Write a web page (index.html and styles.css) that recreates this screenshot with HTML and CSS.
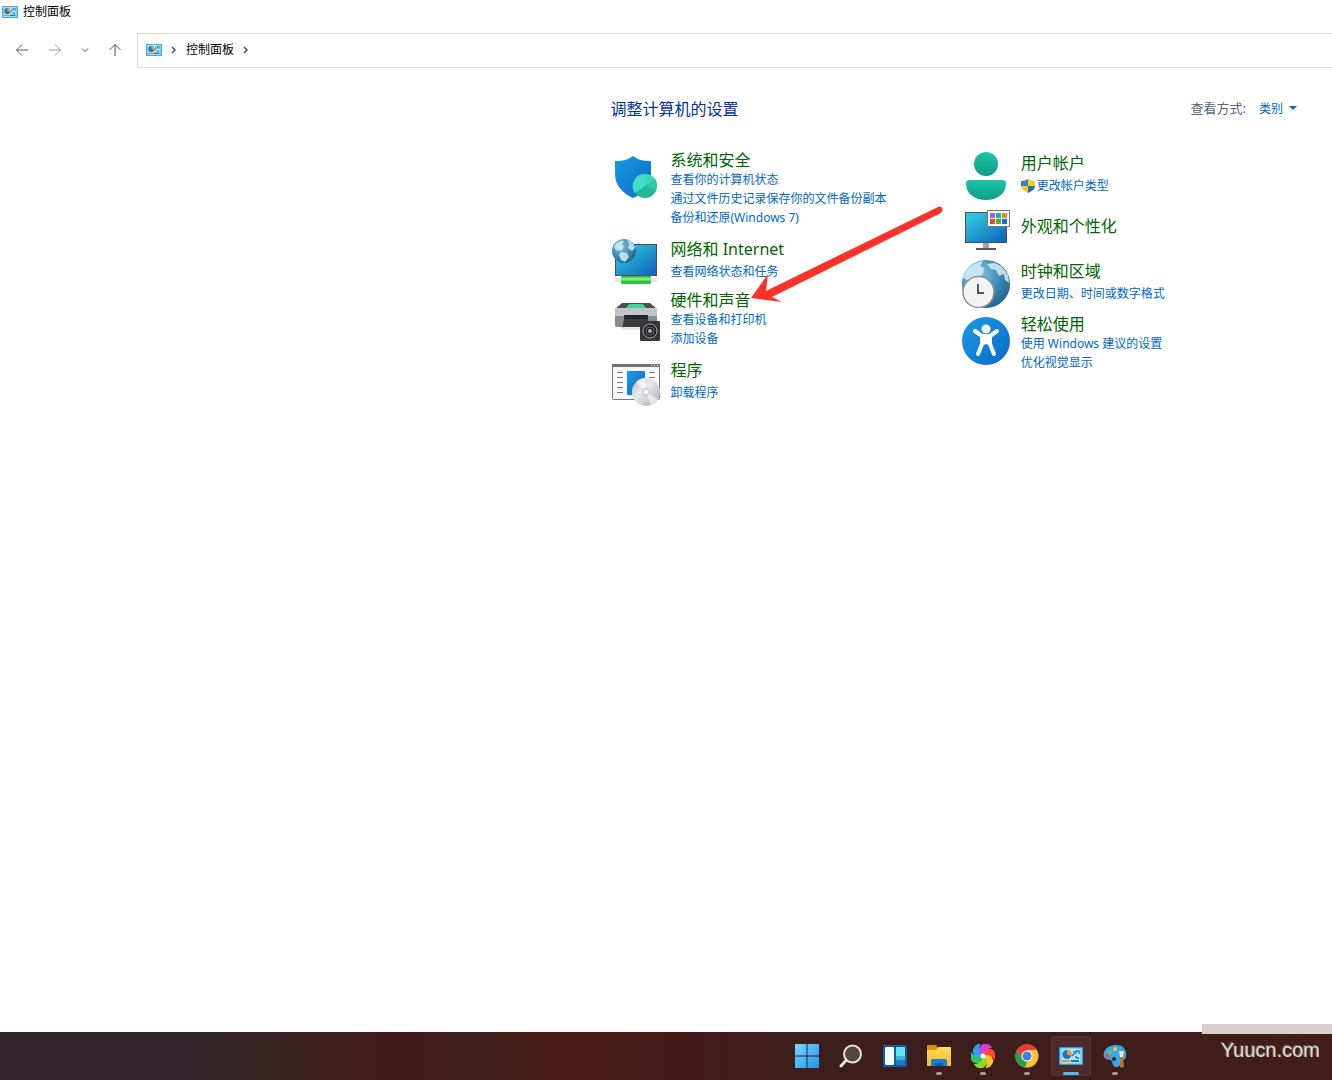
FILE: index.html
```html
<!DOCTYPE html>
<html lang="zh-CN">

<head>
    <meta charset="UTF-8">
    <meta name="viewport" content="width=device-width, initial-scale=1.0">
    <title>控制面板</title>
    <link rel="stylesheet" href="styles.css">
</head>

<body>
    <!-- shared icons -->
    <svg class="sprite" aria-hidden="true">
        <defs>
            <linearGradient id="screen" x1="0" y1="0" x2="1" y2="1">
                <stop offset="0" stop-color="#35d3e6" />
                <stop offset="1" stop-color="#0a62b8" />
            </linearGradient>
            <linearGradient id="blue" x1="0" y1="0" x2="1" y2="1">
                <stop offset="0" stop-color="#1c9be6" />
                <stop offset="1" stop-color="#0868c8" />
            </linearGradient>
            <linearGradient id="start" x1="0" y1="0" x2="1" y2="1">
                <stop offset="0" stop-color="#7ad6fc" />
                <stop offset="1" stop-color="#1d95f2" />
            </linearGradient>
            <linearGradient id="teal" x1="0" y1="0" x2="0" y2="1">
                <stop offset="0" stop-color="#1cc4aa" />
                <stop offset="1" stop-color="#109d88" />
            </linearGradient>
            <radialGradient id="globe" cx=".35" cy=".3" r=".8">
                <stop offset="0" stop-color="#8cc8e0" />
                <stop offset=".5" stop-color="#3f8fb8" />
                <stop offset="1" stop-color="#1d5f89" />
            </radialGradient>
            <linearGradient id="disc" x1="0" y1="0" x2="1" y2="1">
                <stop offset="0" stop-color="#b9bcbf" />
                <stop offset=".4" stop-color="#e9eaeb" />
                <stop offset="1" stop-color="#a6a9ac" />
            </linearGradient>
            <linearGradient id="folder" x1="0" y1="0" x2="0" y2="1">
                <stop offset="0" stop-color="#ffd95c" />
                <stop offset="1" stop-color="#f5b92b" />
            </linearGradient>
        </defs>
        <symbol id="panel" viewBox="0 0 24 18">
            <rect width="24" height="18" rx="1" fill="#2b9bd7" />
            <rect x="1" y="1" width="22" height="16" fill="#7dd0f7" />
            <rect x="3" y="2" width="18" height="14" fill="#b3e6fb" />
            <circle cx="8" cy="7.500" r="4.500" fill="#1478c8" />
            <path d="M8 7.500V2.500A5 5 0 0 1 12.500 9z" fill="#f59a23" />
            <path d="M13 9l2-2V4M17 7V4h3v3M17 11h3M17 9v2" fill="none" stroke="#1670b8" stroke-width="1.300" />
            <path d="M3 14h8" stroke="#f08a24" stroke-width="2" />
            <path d="M12 14h8" stroke="#1478c8" stroke-width="2" />
        </symbol>
        <symbol id="petal" viewBox="0 0 24 24">
            <path d="M12 12C7 9 7 3 12 0c4-1 8 1 9 4-5 0-8 3-9 8z" />
        </symbol>
    </svg>

    <header>
        <div class="titlebar">
            <svg class="panel_icon"><use href="#panel" /></svg>
            <span>控制面板</span>
        </div>
        <div class="toolbar">
            <div class="nav_buttons">
                <button type="button" class="back" aria-label="后退"><svg width="14" height="14" viewBox="0 0 14 14"><path d="M13 7H1.500M7 1.500L1.500 7 7 12.500" /></svg></button>
                <button type="button" class="forward" aria-label="前进"><svg width="14" height="14" viewBox="0 0 14 14"><path d="M1 7h11.500M7 1.500L12.500 7 7 12.500" /></svg></button>
                <button type="button" class="recent" aria-label="最近位置"><svg width="8" height="8" viewBox="0 0 8 8"><path d="M1 2.500l3 3 3-3" /></svg></button>
                <button type="button" class="up" aria-label="向上"><svg width="14" height="14" viewBox="0 0 14 14"><path d="M7 13V1.500M1.500 7L7 1.500 12.500 7" /></svg></button>
            </div>
            <nav class="address">
                <svg class="panel_icon"><use href="#panel" /></svg>
                <svg class="chevron" viewBox="0 0 6 8"><path d="M1 1l3 3-3 3" /></svg>
                <a href="#">控制面板</a>
                <svg class="chevron" viewBox="0 0 6 8"><path d="M1 1l3 3-3 3" /></svg>
            </nav>
        </div>
    </header>

    <div class="content">
        <main>
            <div class="heading">
                <h1>调整计算机的设置</h1>
                <div class="view">
                    <label for="view">查看方式:</label>
                    <div class="view_select">
                        <select id="view" name="view">
                            <option>类别</option>
                            <option>大图标</option>
                            <option>小图标</option>
                        </select>
                        <svg width="8" height="4" viewBox="0 0 8 4"><path d="M0 0h8L4 4z" fill="#0066cc" /></svg>
                    </div>
                </div>
            </div>

            <div class="categories">
                <div class="column">
                    <section class="category multi">
                        <svg class="icon" viewBox="0 0 48 48">
                            <path d="M21 3c5 4 10 5 18 5v13c0 12-8 20-18 24C10 40 3 32 3 21V8c8 0 13-1 18-5z" fill="url(#blue)" />
                            <circle cx="33" cy="33" r="12" fill="#25b79b" />
                            <path d="M33 33L23 40A12 12 0 0 1 33 21z" fill="#3fe0c5" />
                            <path d="M33 33V21a12 12 0 0 1 10 5z" fill="#43d6bb" />
                            <path d="M33 33l10-7a12 12 0 0 1 1 11z" fill="#2fc7aa" />
                        </svg>
                        <div class="text">
                            <h2><a href="#">系统和安全</a></h2>
                            <ul>
                                <li><a href="#">查看你的计算机状态</a></li>
                                <li><a href="#">通过文件历史记录保存你的文件备份副本</a></li>
                                <li><a href="#">备份和还原(Windows 7)</a></li>
                            </ul>
                        </div>
                    </section>

                    <section class="category">
                        <svg class="icon" viewBox="0 0 48 48">
                            <rect x="3" y="6" width="42" height="32" fill="#4a5157" />
                            <rect x="4" y="7" width="40" height="30" fill="url(#screen)" />
                            <rect x="3" y="40" width="42" height="4" rx="1" fill="#e9dfea" />
                            <rect x="9" y="38" width="30" height="8" rx="1" fill="#2fc044" />
                            <path d="M9 41h30" stroke="#83ec7a" stroke-width="3" />
                            <circle cx="12" cy="13" r="12" fill="url(#globe)" />
                            <path d="M2 9c2-5 7-7 10-6l-2 4 2 2-3 4-5-1zM15 2c5 1 7 4 8 8l-3 3-4-3 1-4zM9 14l6 1 2 4-4 5-4-2-2-5z" fill="#d2ebf0" opacity=".85" />
                        </svg>
                        <div class="text">
                            <h2><a href="#">网络和 Internet</a></h2>
                            <ul>
                                <li><a href="#">查看网络状态和任务</a></li>
                            </ul>
                        </div>
                    </section>

                    <section class="category multi">
                        <svg class="icon" viewBox="0 0 48 48">
                            <path d="M10 10h28l7 6H3z" fill="#4b4e52" />
                            <path d="M17 11h14l3 4H14z" fill="#38d49a" />
                            <rect x="3" y="15" width="42" height="19" rx="2" fill="#858b93" />
                            <rect x="3" y="15" width="42" height="8" rx="1" fill="#c1c5cb" />
                            <rect x="12" y="22" width="24" height="8" rx="1" fill="#202327" />
                            <path d="M12 26h24v11H10z" fill="#383b40" />
                            <path d="M11 34h18v3H9z" fill="#e8e9ec" />
                            <rect x="28" y="28" width="20" height="20" rx="1" fill="#34363a" />
                            <circle cx="38" cy="38" r="7" fill="#222427" stroke="#a6a8ab" />
                            <circle cx="38" cy="38" r="4" fill="none" stroke="#686a6d" />
                            <circle cx="38" cy="38" r="2" fill="#aeb0b3" />
                        </svg>
                        <div class="text">
                            <h2><a href="#">硬件和声音</a></h2>
                            <ul>
                                <li><a href="#">查看设备和打印机</a></li>
                                <li><a href="#">添加设备</a></li>
                            </ul>
                        </div>
                        <!-- pointer to this category -->
                        <svg class="pointer" width="194" height="100" viewBox="0 0 194 100">
                            <path d="M0 93L17 69l-2 17 172-84c4-2 6 4 3 6L21 92l10 5z" fill="#fa3228" />
                        </svg>
                    </section>

                    <section class="category">
                        <svg class="icon" viewBox="0 0 48 48">
                            <rect x=".5" y="5.500" width="47" height="35" rx="1" fill="#f8f9fa" stroke="#747779" />
                            <path d="M0 5h48v3H0z" fill="#717477" />
                            <path d="M39 6.500h1M42 6.500h1M45 6.500h1" stroke="#fff" />
                            <path d="M5 13.500h6M5 18.500h6M5 23.500h6M5 28.500h6M5 33.500h6M37 13.500h6M37 18.500h6" stroke="#777a7d" />
                            <rect x="15" y="12" width="18" height="24" rx="1" fill="url(#blue)" />
                            <circle cx="34" cy="33" r="14" fill="url(#disc)" />
                            <path d="M34 33L24 23a14 14 0 0 1 9-4zM34 33l12 7a14 14 0 0 1-7 6z" fill="#fff" opacity=".6" />
                            <circle cx="34" cy="33" r="4" fill="#d2d4d6" />
                            <circle cx="34" cy="33" r="2" fill="#fff" />
                        </svg>
                        <div class="text">
                            <h2><a href="#">程序</a></h2>
                            <ul>
                                <li><a href="#">卸载程序</a></li>
                            </ul>
                        </div>
                    </section>
                </div>

                <div class="column second">
                    <section class="category">
                        <svg class="icon" viewBox="0 0 48 48">
                            <circle cx="24" cy="12" r="12" fill="url(#teal)" />
                            <path d="M8 28h32c3 0 4 1 4 4 0 10-9 16-20 16S4 42 4 32c0-3 1-4 4-4z" fill="url(#teal)" />
                        </svg>
                        <div class="text">
                            <h2><a href="#">用户帐户</a></h2>
                            <ul>
                                <li class="shielded">
                                    <svg width="14" height="14" viewBox="0 0 14 14">
                                        <path d="M7 0c2 1 4 2 7 2v5H7z" fill="#fbc81b" />
                                        <path d="M7 0C5 1 3 2 0 2v5h7z" fill="#2c87c9" />
                                        <path d="M0 7h7v7C3 12 0 10 0 7z" fill="#fbc81b" />
                                        <path d="M14 7H7v7c4-2 7-4 7-7z" fill="#1c70b5" />
                                    </svg>
                                    <a href="#">更改帐户类型</a>
                                </li>
                            </ul>
                        </div>
                    </section>

                    <section class="category title_only">
                        <svg class="icon" viewBox="0 0 48 48">
                            <rect x="3" y="6" width="42" height="31" fill="#4a5157" />
                            <rect x="4" y="7" width="40" height="29" fill="url(#screen)" />
                            <path d="M21 37h6v5h-6z" fill="#a2a5a8" />
                            <path d="M14 42h20v2H14z" fill="#55595d" />
                            <rect x="25.500" y="4.500" width="22" height="16" fill="#fff" stroke="#777" />
                            <path d="M28 7h5v5h-5z" fill="#9a60df" />
                            <path d="M34 7h5v5h-5z" fill="#12b4b2" />
                            <path d="M40 7h5v5h-5z" fill="#f28a18" />
                            <path d="M28 13h5v5h-5z" fill="#e14d20" />
                            <path d="M34 13h5v5h-5z" fill="#58ae22" />
                            <path d="M40 13h5v5h-5z" fill="#126fd5" />
                        </svg>
                        <div class="text">
                            <h2><a href="#">外观和个性化</a></h2>
                        </div>
                    </section>

                    <section class="category">
                        <svg class="icon" viewBox="0 0 48 48">
                            <circle cx="24" cy="24" r="24" fill="url(#globe)" />
                            <path d="M1 18C4 8 12 2 21 1l-3 5 4 2-1 6-7 3-4 4-5-1zM25 4l8-1 7 4 6 8 1 8-4-3-1-6-5 2-3-6-5-1z" fill="#d9edf2" opacity=".85" />
                            <circle cx="16.500" cy="32" r="15.500" fill="#f3f3f4" stroke="#8e9194" stroke-width="1.500" />
                            <path d="M16 24v9h6" fill="none" stroke="#555" stroke-width="2" />
                        </svg>
                        <div class="text">
                            <h2><a href="#">时钟和区域</a></h2>
                            <ul>
                                <li><a href="#">更改日期、时间或数字格式</a></li>
                            </ul>
                        </div>
                    </section>

                    <section class="category multi">
                        <svg class="icon" viewBox="0 0 48 48">
                            <circle cx="24" cy="24" r="24" fill="url(#blue)" />
                            <circle cx="24" cy="12" r="4.500" fill="#fff" />
                            <path d="M13 14l7 5h8l7-5M20 19v8l-4 10M28 19v8l4 10" fill="none" stroke="#fff" stroke-width="4" stroke-linecap="round" stroke-linejoin="round" />
                            <path d="M19 18h10v11l-5-2-5 2z" fill="#fff" />
                        </svg>
                        <div class="text">
                            <h2><a href="#">轻松使用</a></h2>
                            <ul>
                                <li><a href="#">使用 Windows 建议的设置</a></li>
                                <li><a href="#">优化视觉显示</a></li>
                            </ul>
                        </div>
                    </section>
                </div>
            </div>
        </main>
    </div>

    <footer class="taskbar">
        <div class="apps">
            <button type="button" aria-label="开始">
                <svg viewBox="0 0 24 24"><path d="M0 0h11.500v11.500H0zM12.500 0H24v11.500H12.500zM0 12.500h11.500V24H0zM12.500 12.500H24V24H12.500z" fill="url(#start)" /></svg>
            </button>
            <button type="button" aria-label="搜索">
                <svg viewBox="0 0 24 24"><path d="M7.500 16L2 22" stroke="#e8e2e1" stroke-width="3" stroke-linecap="round" /><circle cx="13.500" cy="10" r="8.500" fill="#554544" stroke="#e8e2e1" stroke-width="2" /></svg>
            </button>
            <button type="button" aria-label="小组件">
                <svg viewBox="0 0 24 24"><rect y="1" width="24" height="22" rx="1" fill="#125b9f" /><rect x="2" y="3" width="9" height="18" rx="1" fill="#f5fbff" /><path d="M13 3h9v10h-9z" fill="#65e6ed" /><path d="M13 12h9v4h-9z" fill="#36b8cb" /><path d="M13 16h9v5h-9z" fill="#2279bd" /></svg>
            </button>
            <button type="button" class="running" aria-label="文件资源管理器">
                <svg viewBox="0 0 24 24"><path d="M0 2c0-1 0-1 1-1h8l2 3v4H0z" fill="#d6920d" /><path d="M0 6h9l2-3h12c1 0 1 0 1 1v18H0z" fill="url(#folder)" /><path d="M4 22v-5c0-2 1-2 2-2h12c1 0 2 1 2 2v5z" fill="#1681d5" /><path d="M8 19h8v3H8z" fill="#0b5da9" /></svg>
            </button>
            <button type="button" class="running" aria-label="浏览器">
                <svg viewBox="0 0 24 24">
                    <circle cx="12" cy="12" r="9" fill="#f08a3a" />
                    <use href="#petal" width="24" height="24" fill="#d53ce0" />
                    <use href="#petal" width="24" height="24" fill="#ff4438" transform="rotate(60 12 12)" />
                    <use href="#petal" width="24" height="24" fill="#ffc324" transform="rotate(120 12 12)" />
                    <use href="#petal" width="24" height="24" fill="#8edb2e" transform="rotate(180 12 12)" />
                    <use href="#petal" width="24" height="24" fill="#2fc46a" transform="rotate(240 12 12)" />
                    <use href="#petal" width="24" height="24" fill="#2e9df0" transform="rotate(300 12 12)" />
                    <circle cx="12" cy="12" r="2.500" fill="#fff" />
                </svg>
            </button>
            <button type="button" class="running" aria-label="Chrome">
                <svg viewBox="0 0 24 24"><circle cx="12" cy="12" r="11.500" fill="#fbc52b" /><path d="M2 6a11.500 11.500 0 0 1 20 0H12L7 15z" fill="#e34033" /><path d="M2 6l5 9 5 3-2 5.500A11.500 11.500 0 0 1 2 6z" fill="#2c9d4b" /><circle cx="12" cy="12" r="5.500" fill="#fff" /><circle cx="12" cy="12" r="4.500" fill="#3f7fe8" /></svg>
            </button>
            <button type="button" class="running active" aria-label="控制面板">
                <svg viewBox="0 -3 24 24"><use href="#panel" width="24" height="18" /></svg>
            </button>
            <button type="button" class="running" aria-label="画图">
                <svg viewBox="0 0 24 24"><path d="M14 1c7 0 10 6 9 12-1 3-4 3-5 5 0 3-2 5-5 5-4 0-3-5-5-7-2-1-5 1-7-3C-1 6 6 0 14 1z" fill="#36a8e8" /><circle cx="11" cy="15" r="2" fill="#3a1f1e" /><circle cx="7" cy="8" r="2" fill="#75c83f" /><circle cx="12" cy="5" r="2" fill="#ffc735" /><circle cx="4" cy="12" r="2" fill="#ef4d38" /><path d="M16 7h5l-1 6h-3z" fill="#efe4d5" /><path d="M17 13h3l1 9c-1 2-4 2-4 0z" fill="#bd7328" /></svg>
            </button>
        </div>
        <span class="watermark">Yuucn.com</span>
        <div class="strip"></div>
    </footer>
</body>

</html>
```
FILE: styles.css
```css
* {
    box-sizing: border-box;
}

body {
    margin: 0;
    min-height: 100vh;
    display: flex;
    flex-direction: column;
    background: #fff;
    color: #000;
    font-family: "Noto Sans", "Noto Sans CJK SC", sans-serif;
    font-size: 12px;
    line-height: 19px;
}

h1,
h2,
ul {
    margin: 0;
    padding: 0;
    font-weight: normal;
    list-style: none;
}

a {
    color: #0066cc;
    text-decoration: none;
}

a:hover {
    text-decoration: underline;
}

button {
    padding: 0;
    border: none;
    background: none;
}

.sprite {
    position: absolute;
    width: 0;
    height: 0;
}

.panel_icon {
    width: 16px;
    height: 12px;
}

/* window header */
.titlebar {
    display: flex;
    align-items: center;
    gap: 5px;
    height: 23px;
    padding-left: 2px;
}

.toolbar {
    display: flex;
    height: 35px;
    margin-top: 10px;
}

.nav_buttons {
    display: flex;
    align-items: center;
    gap: 19px;
    padding: 0 15px 2px;
}

.nav_buttons button {
    display: flex;
}

.nav_buttons svg,
.chevron {
    fill: none;
    stroke: #555;
}

.nav_buttons .forward svg {
    stroke: #999;
}

.address {
    flex: 1;
    display: flex;
    align-items: center;
    gap: 9px;
    padding: 0 0 2px 8px;
    border: 1px solid #d9d9d9;
    border-right: none;
}

.address a {
    color: #000;
}

.chevron {
    width: 6px;
    height: 8px;
    stroke-width: 1.5;
}

/* categories */
.content {
    flex: 1;
    display: grid;
    grid-template-columns: 11fr 13fr;
}

main {
    grid-column: 2;
    padding: 29px 35px 0 0;
}

.heading {
    display: flex;
    justify-content: space-between;
    align-items: flex-start;
    height: 24px;
}

h1 {
    color: #003399;
    font-size: 16px;
    line-height: 24px;
}

.view {
    display: flex;
    gap: 13px;
    color: #5a6478;
}

.view label {
    font-size: 13px;
    line-height: 22px;
}

.view_select {
    display: flex;
    align-items: center;
}

.view select {
    width: 30px;
    padding: 0;
    border: none;
    background: none;
    appearance: none;
    color: #0066cc;
    font: inherit;
}

.categories {
    display: grid;
    grid-template-columns: 1fr 1fr;
    gap: 14px;
    padding-top: 29px;
}

.column {
    display: flex;
    flex-direction: column;
    gap: 4px;
}

.second {
    gap: 6px;
    padding-top: 2px;
}

.category {
    position: relative;
    display: flex;
    align-items: flex-start;
    gap: 11px;
    padding-left: 1px;
}

.icon {
    flex: none;
    width: 48px;
    height: 48px;
}

.text {
    padding-top: 1px;
    white-space: nowrap;
}

h2 {
    font-size: 16px;
    line-height: 20px;
}

h2 a {
    color: #006600;
}

.category ul {
    padding-top: 3px;
}

.multi {
    padding-bottom: 7px;
}

.multi .icon {
    margin-top: 3px;
}

.multi .text,
.multi ul {
    padding-top: 0;
}

.title_only .text {
    padding-top: 10px;
}

.shielded {
    display: flex;
    align-items: center;
    gap: 2px;
}

.pointer {
    position: absolute;
    left: 140px;
    top: -85px;
    pointer-events: none;
}

/* taskbar */
.taskbar {
    position: relative;
    display: flex;
    align-items: center;
    justify-content: space-between;
    height: 48px;
    padding: 0 12px 0 59%;
    background: linear-gradient(90deg, #30252d 0%, #30252a 14%, #3a2020 23%, #421a18 30%, #3c1f1c 36%, #491a15 41%, #431a19 52%, #3c1e1c 60%, #411d1b 100%);
}

.apps {
    display: flex;
    gap: 4px;
    padding-left: 1px;
}

.apps button {
    position: relative;
    display: flex;
    align-items: center;
    justify-content: center;
    width: 40px;
    height: 40px;
    border-radius: 4px;
}

.apps svg {
    width: 24px;
    height: 24px;
}

.apps .active {
    background: #4c2b2a;
    box-shadow: inset 0 0 0 1px #563635;
}

.running::after {
    content: "";
    position: absolute;
    bottom: 1px;
    width: 6px;
    height: 3px;
    border-radius: 2px;
    background: #a89a99;
}

.active::after {
    width: 16px;
    background: #55b8f0;
}

.watermark {
    padding-bottom: 11px;
    color: #ddd;
    font-family: "Liberation Sans", sans-serif;
    font-size: 20px;
    text-shadow: -1px -1px 1px #777;
}

.strip {
    position: absolute;
    right: 0;
    top: -8px;
    width: 130px;
    height: 10px;
    background: #d7d0ce;
}
```
